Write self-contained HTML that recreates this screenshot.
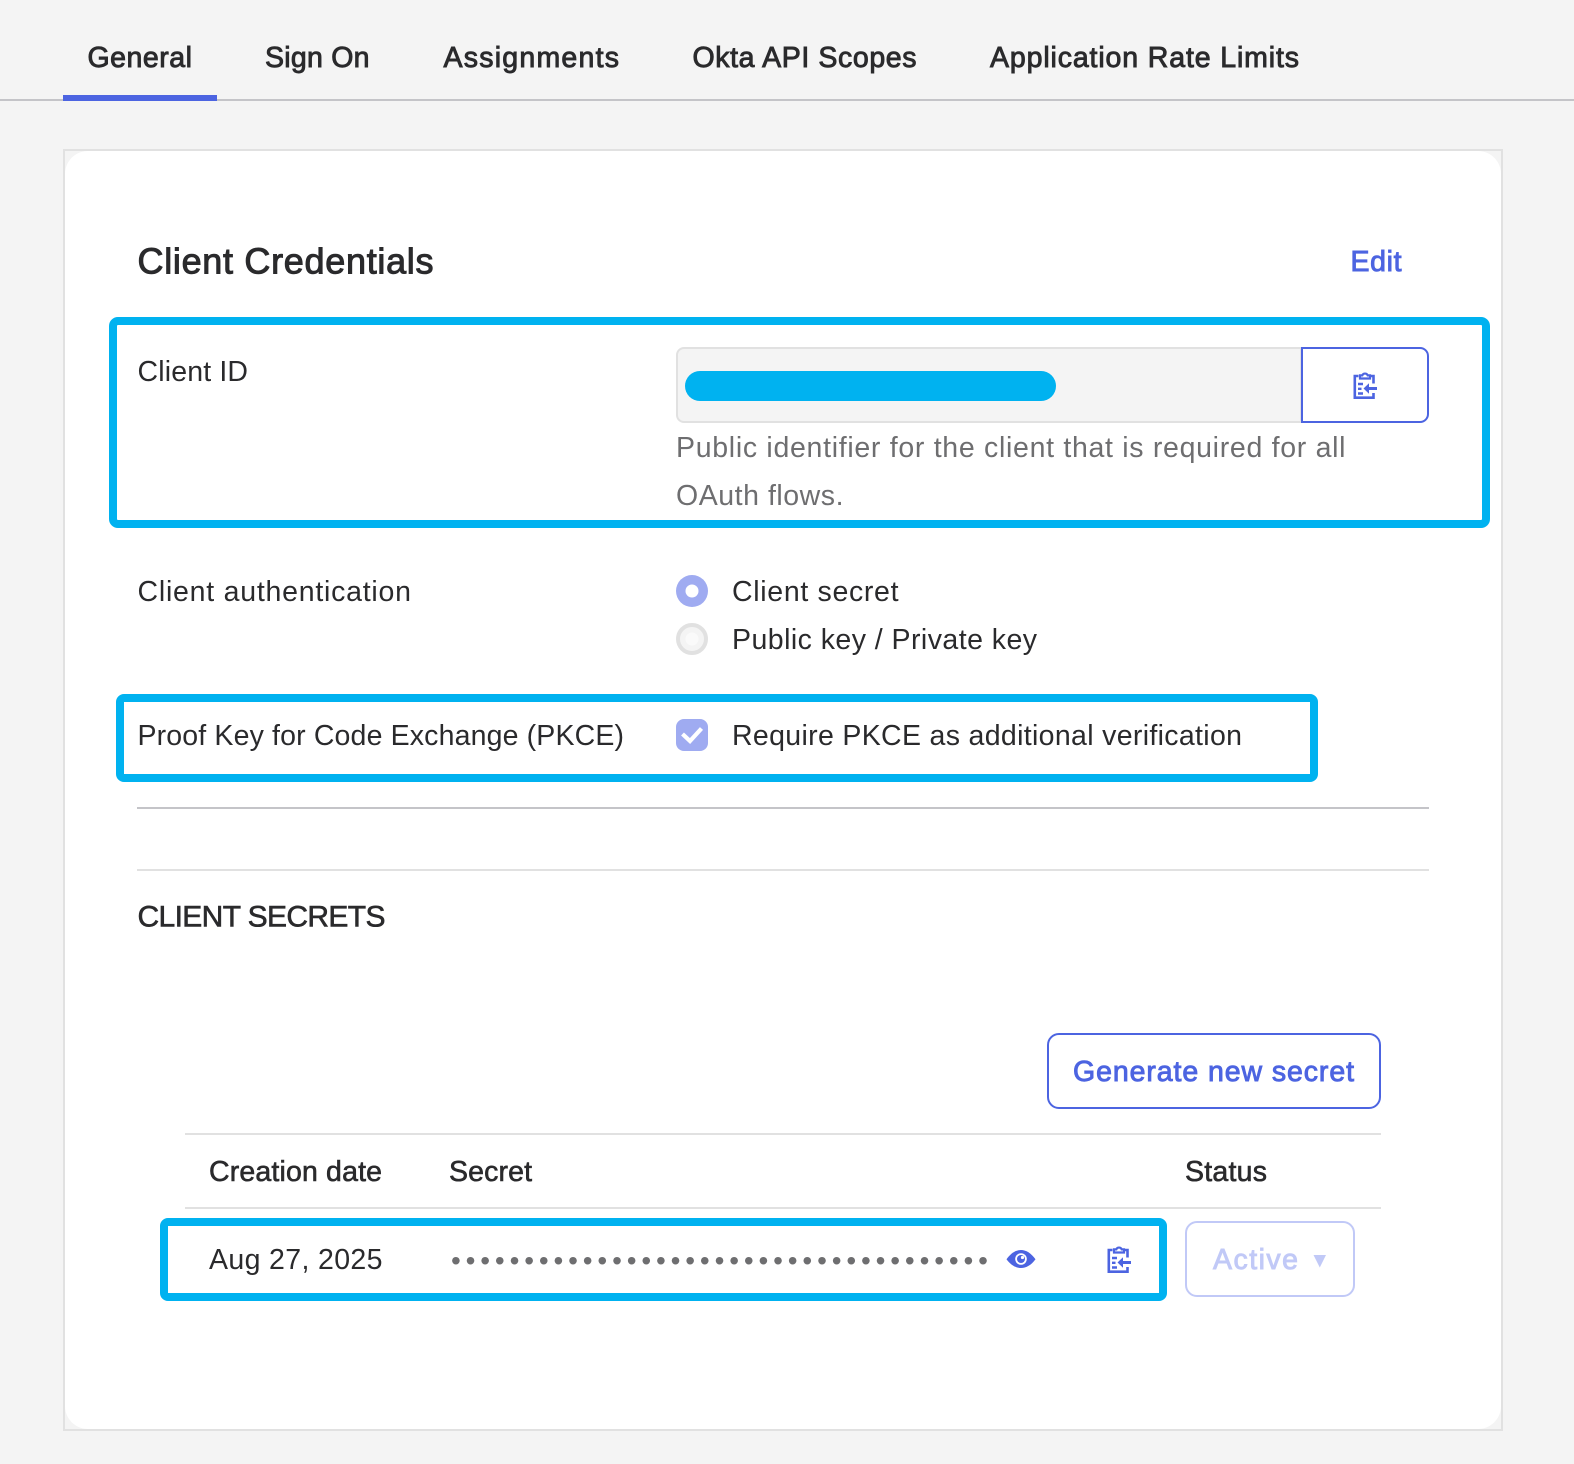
<!DOCTYPE html>
<html><head><meta charset="utf-8"><title>Client Credentials</title>
<style>
html,body{margin:0;padding:0;width:1574px;height:1464px;background:#f4f4f4;overflow:hidden}
svg{display:block}
text{font-family:"Liberation Sans",Arial,sans-serif;font-size:28.5px;fill:#2a2a2c}
.s{stroke:#2a2a2c;stroke-width:.9px}
.b{fill:#4c64e1;stroke:#4c64e1;stroke-width:.9px}
.g{fill:#6e6e70}
</style></head><body>
<svg width="1574" height="1464" viewBox="0 0 1574 1464" xmlns="http://www.w3.org/2000/svg">
<defs>
<g id="clip" fill="none" stroke="#4c64e1" stroke-width="2.6">
<path d="M5 5H1.3V26.7H20V22M20 12.5V5H16.5"/>
<path d="M6.5 7.5V4.4H8.8A2.9 2.9 0 0 1 14.2 4.4H16.5V7.5Z" stroke-width="2.2"/>
<path d="M13 17.5H23.5" stroke-width="3"/>
<path d="M4.5 13H9.5M4.5 17.8H8M4.5 22.5H9.5" stroke-width="2.4"/>
<path d="M10 17.5L15.5 12.2V22.8Z" fill="#4c64e1" stroke="none"/>
</g>
</defs>
<rect width="1574" height="1464" fill="#f4f4f4"/>

<!-- tabs -->
<rect x="0" y="99" width="1574" height="2" fill="#c4c4c8"/>
<rect x="63" y="95" width="154" height="6" fill="#4c64e1"/>
<text class="s" x="87.5" y="67" textLength="104.5">General</text>
<text class="s" x="265" y="67" textLength="104.5">Sign On</text>
<text class="s" x="443.5" y="67" textLength="175.5">Assignments</text>
<text class="s" x="692.5" y="67" textLength="224">Okta API Scopes</text>
<text class="s" x="990" y="67" textLength="309">Application Rate Limits</text>

<!-- card -->
<rect x="64" y="150" width="1438" height="1280" fill="#f4f4f4" stroke="#e1e1e1" stroke-width="2"/>
<rect x="65" y="151" width="1436" height="1278" rx="23" fill="#fff"/>

<text class="s" x="137.5" y="273.3" textLength="296" style="font-size:36px;stroke-width:1px">Client Credentials</text>
<text class="b" x="1350.5" y="271" textLength="51">Edit</text>

<!-- client id -->
<text x="137.5" y="381" textLength="110.5">Client ID</text>
<path d="M1301 348H684a7 7 0 0 0-7 7V415a7 7 0 0 0 7 7H1301Z" fill="#f4f4f4" stroke="#e1e1e1" stroke-width="2"/>
<path d="M1302 348H1420a8 8 0 0 1 8 8V414a8 8 0 0 1-8 8H1302Z" fill="#fff" stroke="#4c64e1" stroke-width="2"/>
<use href="#clip" x="1353.5" y="371"/>
<rect x="685" y="371" width="371" height="30" rx="15" fill="#00b2f0"/>
<text class="g" x="676" y="457" textLength="669.5">Public identifier for the client that is required for all</text>
<text class="g" x="676" y="505" textLength="167.5">OAuth flows.</text>
<rect x="113" y="321" width="1373" height="203" rx="5" fill="none" stroke="#00b2f0" stroke-width="8"/>

<!-- client authentication -->
<text x="137.5" y="601" textLength="273.5">Client authentication</text>
<circle cx="692" cy="591" r="16" fill="#9fabf1"/>
<circle cx="692" cy="591" r="6.5" fill="#fff"/>
<text x="732" y="601" textLength="166.5">Client secret</text>
<circle cx="692" cy="639" r="14" fill="#f4f4f4" stroke="#e1e1e1" stroke-width="4"/>
<circle cx="692" cy="639" r="6.5" fill="#fafafa"/>
<text x="732" y="649" textLength="305">Public key / Private key</text>

<!-- pkce -->
<text x="137.5" y="745" textLength="486.5">Proof Key for Code Exchange (PKCE)</text>
<rect x="676" y="719" width="32" height="32" rx="8" fill="#9fabf1"/>
<path d="M682.5 734L690 741L701.5 728.5" fill="none" stroke="#fff" stroke-width="4.2"/>
<text x="732" y="745" textLength="510">Require PKCE as additional verification</text>
<rect x="120" y="698" width="1194" height="80" rx="4" fill="none" stroke="#00b2f0" stroke-width="8"/>

<rect x="137" y="807" width="1292" height="2" fill="#c4c4c8"/>
<rect x="137" y="869" width="1292" height="2" fill="#e1e1e1"/>

<!-- client secrets -->
<text class="s" x="137.5" y="926.5" textLength="248" style="font-size:30px;stroke-width:.6px">CLIENT SECRETS</text>
<rect x="1048" y="1034" width="332" height="74" rx="11" fill="#fff" stroke="#4c64e1" stroke-width="2"/>
<text class="b" x="1073" y="1081" textLength="281">Generate new secret</text>

<rect x="185" y="1133" width="1196" height="2" fill="#e1e1e1"/>
<rect x="185" y="1207" width="1196" height="2" fill="#e1e1e1"/>
<text class="s" x="209" y="1181" textLength="173" style="stroke-width:.6px">Creation date</text>
<text class="s" x="449" y="1181" textLength="83" style="stroke-width:.6px">Secret</text>
<text class="s" x="1185" y="1181" textLength="82" style="stroke-width:.6px">Status</text>

<text x="209" y="1269" textLength="173.5">Aug 27, 2025</text>
<text x="451" y="1270" style="font-size:28px;fill:#6e6e70;letter-spacing:4.84px">•••••••••••••••••••••••••••••••••••••</text>
<path d="M1006.5 1259.3C1011 1253 1016 1250 1021 1250C1026 1250 1031 1253 1035.5 1259.3C1031 1265.5 1026 1268 1021 1268C1016 1268 1011 1265.5 1006.5 1259.3Z" fill="#4c64e1"/>
<circle cx="1021" cy="1259" r="5.8" fill="#fff"/>
<circle cx="1021" cy="1259" r="4" fill="#4c64e1"/>
<circle cx="1022.5" cy="1257.5" r="1.6" fill="#fff"/>
<use href="#clip" x="1107.5" y="1245"/>
<rect x="164" y="1222" width="999" height="75" rx="4" fill="none" stroke="#00b2f0" stroke-width="8"/>

<rect x="1186" y="1222" width="168" height="74" rx="11" fill="#fff" stroke="#c1c9f7" stroke-width="2"/>
<text x="1213" y="1269" textLength="85" style="fill:#c1c9f7;stroke:#c1c9f7;stroke-width:.9px">Active</text>
<path d="M1313.5 1255H1326L1319.8 1267.5Z" fill="#c1c9f7"/>
</svg>
</body></html>
